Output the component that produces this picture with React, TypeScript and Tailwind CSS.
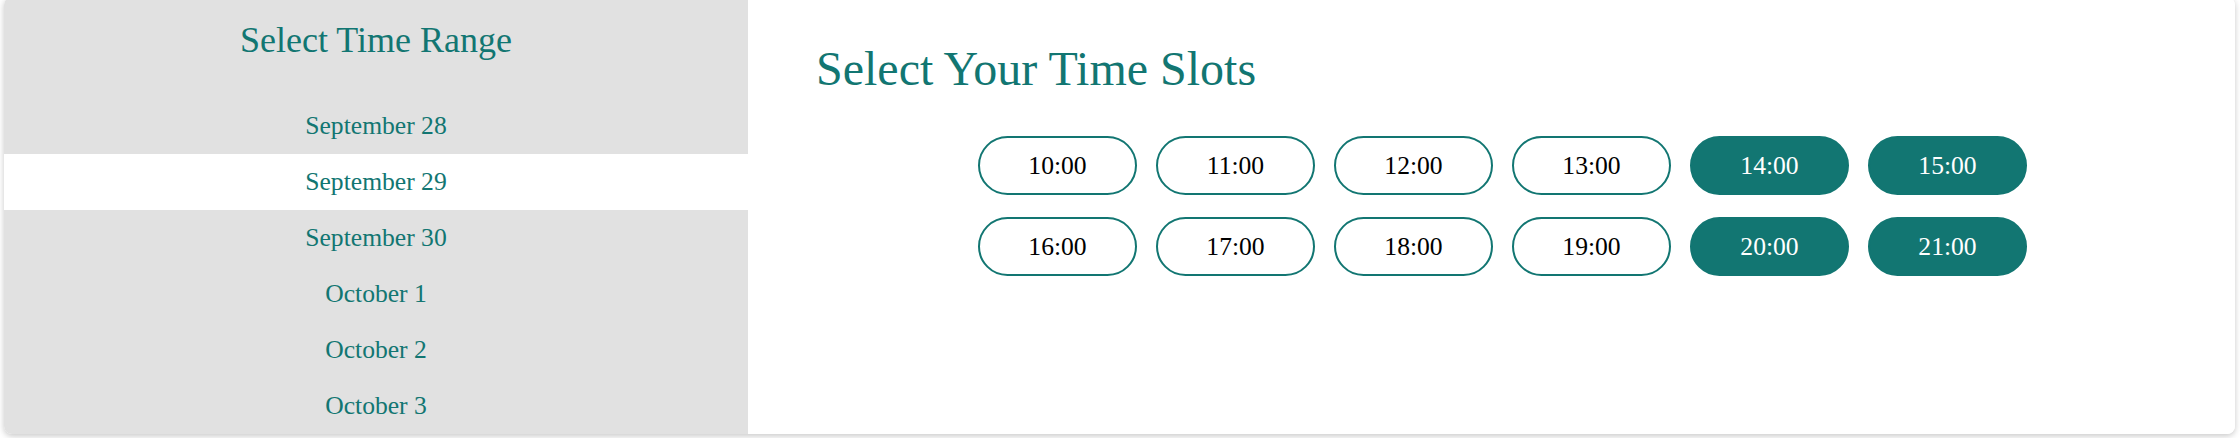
import React from "react";

const dates = ["September 28", "September 29", "September 30", "October 1", "October 2", "October 3"];
const slots = ["10:00", "11:00", "12:00", "13:00", "14:00", "15:00", "16:00", "17:00", "18:00", "19:00", "20:00", "21:00"];
const selected = new Set(["14:00", "15:00", "20:00", "21:00"]);

export default function App() {
  return (
    <div
      className="w-[2240px] h-[438px] overflow-hidden bg-white"
      style={{ fontFamily: '"Liberation Serif", "Times New Roman", serif' }}
    >
      <div className="ml-[4px] -mt-[3px] w-[2231px] h-[437px] rounded-lg overflow-hidden bg-white flex shadow-[0_2px_6px_rgba(0,0,0,0.22)]">
        <div className="w-[744px] bg-[#e1e1e1] pt-[23px] flex flex-col">
          <h2 className="text-center text-[36px] leading-[40px] text-[#127672] font-normal">Select Time Range</h2>
          <ul className="mt-[38px] flex flex-col">
            {dates.map((d) => (
              <li
                key={d}
                className={`h-[56px] flex items-center justify-center text-[25.6px] leading-[56px] text-[#127672] ${
                  d === "September 29" ? "bg-white" : ""
                }`}
              >
                {d}
              </li>
            ))}
          </ul>
        </div>
        <div className="flex-1 bg-white pt-[44px] pl-[68px]">
          <h1 className="text-[48px] leading-[56px] text-[#127672] font-normal">Select Your Time Slots</h1>
          <div className="mt-[39px] ml-[162px] grid grid-cols-[repeat(6,159px)] gap-x-[19px] gap-y-[22px]">
            {slots.map((s) =>
              selected.has(s) ? (
                <button
                  key={s}
                  className="h-[59px] rounded-full bg-[#127672] border-2 border-[#127672] text-white text-[25.6px] leading-none flex items-center justify-center"
                >
                  {s}
                </button>
              ) : (
                <button
                  key={s}
                  className="h-[59px] rounded-full bg-white border-2 border-[#127672] text-black text-[25.6px] leading-none flex items-center justify-center"
                >
                  {s}
                </button>
              )
            )}
          </div>
        </div>
      </div>
    </div>
  );
}
